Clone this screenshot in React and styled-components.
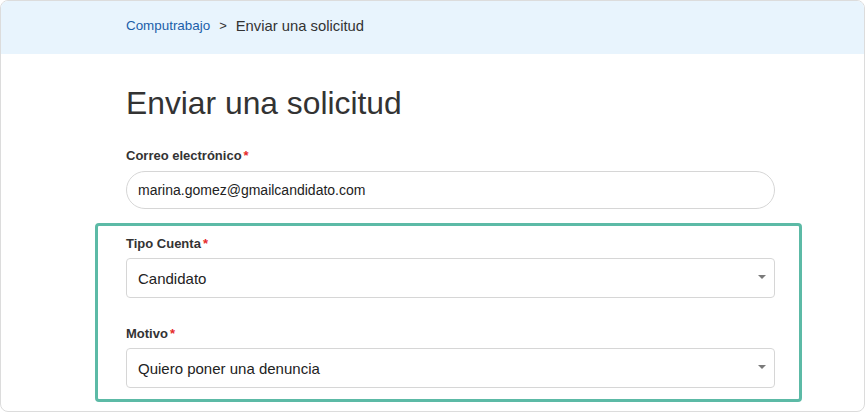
import styled, { createGlobalStyle } from "styled-components";

const Global = createGlobalStyle`
  body {
    margin: 0;
    background: #fff;
    font-family: "Liberation Sans", Arial, sans-serif;
    color: #333;
  }
`

const Card = styled.div`
  width: 865px;
  height: 412px;
  box-sizing: border-box;
  border: 1px solid #dcdcdc;
  border-radius: 8px;
  overflow: hidden;
  background: #fff;
`

const Header = styled.div`
  height: 53px;
  background: #e8f4fd;
  display: flex;
  align-items: flex-start;
  gap: 9px;
  padding: 16px 0 0 125px;
  box-sizing: border-box;
  line-height: 18px;
`

const Crumb = styled.a`
  color: #1b5ea9;
  font-size: 13.4px;
  text-decoration: none;
`

const Sep = styled.span`
  font-size: 13px;
  color: #333;
`

const Current = styled.span`
  font-size: 14.8px;
  color: #333;
`

const Main = styled.div`
  width: 649px;
  margin-left: 125px;
  display: flex;
  flex-direction: column;
`

const Title = styled.h1`
  margin: 30px 0 0;
  font-size: 31.8px;
  line-height: 38px;
  font-weight: 400;
  color: #333;
`

const Label = styled.label`
  display: block;
  margin-top: ${p => p.$top}px;
  font-size: 13px;
  line-height: 16px;
  font-weight: 700;
  color: #333;
`

const Req = styled.span`
  color: #e52a2a;
  margin-left: 2px;
`

const Input = styled.div`
  margin-top: 7px;
  height: 38px;
  box-sizing: border-box;
  border: 1px solid #d6d6d6;
  border-radius: 19px;
  padding: 0 11px;
  display: flex;
  align-items: center;
  font-size: 14px;
  color: #222;
`

const Highlight = styled.div`
  margin: 14px -27px 0 -31px;
  padding: 10px 24px 11px 28px;
  border: 3px solid #5cbaa6;
  border-radius: 4px;
`

const Select = styled.div`
  margin-top: 6px;
  height: 40px;
  box-sizing: border-box;
  border: 1px solid #d6d6d6;
  border-radius: 4px;
  padding: 0 8px 0 11px;
  display: flex;
  align-items: center;
  justify-content: space-between;
  font-size: 15px;
  color: #222;
`

const Caret = styled.span`
  width: 0;
  height: 0;
  margin-top: -3px;
  border-left: 4px solid transparent;
  border-right: 4px solid transparent;
  border-top: 4px solid #7a7a7a;
`

const Field = ({ label, top, children }) => (
  <>
    <Label $top={top}>{label}<Req>*</Req></Label>
    {children}
  </>
)

const App = () => {
  return (
    <>
      <Global />
      <Card>
        <Header>
          <Crumb href="#">Computrabajo</Crumb>
          <Sep>&gt;</Sep>
          <Current>Enviar una solicitud</Current>
        </Header>
        <Main>
          <Title>Enviar una solicitud</Title>
          <Field label="Correo electrónico" top={26}>
            <Input>marina.gomez@gmailcandidato.com</Input>
          </Field>
          <Highlight>
            <Field label="Tipo Cuenta" top={0}>
              <Select>Candidato<Caret /></Select>
            </Field>
            <Field label="Motivo" top={28}>
              <Select>Quiero poner una denuncia<Caret /></Select>
            </Field>
          </Highlight>
        </Main>
      </Card>
    </>
  )
}

export default App;
